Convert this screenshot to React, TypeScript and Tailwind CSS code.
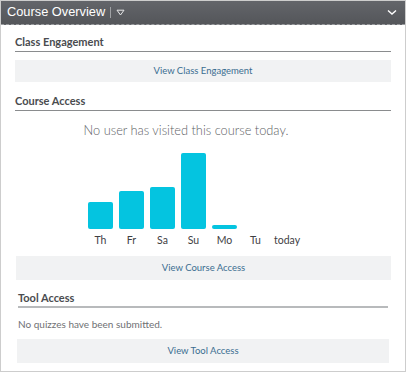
import React from "react";

const bars = [
  { day: "Th", h: 27 },
  { day: "Fr", h: 38 },
  { day: "Sa", h: 42 },
  { day: "Su", h: 76 },
  { day: "Mo", h: 4 },
  { day: "Tu", h: 0 },
  { day: "today", h: 0 },
];

const SectionTitle = ({ children, className = "" }: any) => {
  return (
    <div
      className={`text-[11px] font-bold leading-[14px] text-[#4a4c4f] pb-[2px] border-b border-[#8a8c8e] ${className}`}
    >
      {children}
    </div>
  );
};

const LinkButton = ({ children, className = "" }: any) => {
  return (
    <div
      className={`flex items-center justify-center bg-[#f1f2f3] text-[9.5px] text-[#3b6e91] ${className}`}
    >
      {children}
    </div>
  );
};

export default function App() {
  return (
    <div className="w-[406px] h-[372px] bg-white border border-[#cdcdcd] font-['Lato','Noto_Sans',sans-serif] overflow-hidden">
      <div className="h-6 flex items-center px-[6px] bg-gradient-to-b from-[#63656a] to-[#54565a] border-b border-dashed border-[#9a9c9f] font-['Liberation_Sans',Arial,sans-serif]">
        <span className="text-white text-[12.8px] leading-none">Course Overview</span>
        <span className="ml-[5px] w-px h-[11px] bg-[#9fa1a4]"></span>
        <svg className="ml-[5px]" width="9" height="7" viewBox="0 0 9 7">
          <path d="M1 1.2h7L4.5 6z" fill="none" stroke="#e6e7e8" strokeWidth="1" />
        </svg>
        <svg className="ml-auto mr-[2px]" width="10" height="7" viewBox="0 0 10 7">
          <path d="M1 1.5l4 3.5 4-3.5" fill="none" stroke="#ffffff" strokeWidth="1.4" />
        </svg>
      </div>

      <div className="px-[14px]">
        <SectionTitle className="mt-[10px]">Class Engagement</SectionTitle>
        <LinkButton className="mt-[8px] h-[22px]">View Class Engagement</LinkButton>

        <SectionTitle className="mt-[12px]">Course Access</SectionTitle>
        <div className="mt-[11px] pr-[34px] text-center text-[12.8px] leading-[16px] text-[#606265] font-light">
          No user has visited this course today.
        </div>

        <div className="ml-[73px] mt-[14px] flex gap-[6px] items-end h-[77px]">
          {bars.map((b) => (
            <div
              key={b.day}
              className="w-[25px] rounded-[2px] bg-[#04c4e0]"
              style={{ height: b.h }}
            ></div>
          ))}
        </div>
        <div className="ml-[73px] mt-[4px] flex gap-[6px]">
          {bars.map((b) => (
            <div
              key={b.day}
              className="w-[25px] text-center text-[10.5px] leading-[14px] text-[#3e4043] whitespace-nowrap"
            >
              {b.day}
            </div>
          ))}
        </div>

        <LinkButton className="mt-[9px] h-6 ml-px">View Course Access</LinkButton>
      </div>

      <div className="px-[16px]">
        <div className="mt-[11px] text-[11px] font-bold leading-[14px] text-[#4a4c4f] pb-[1px] border-b-2 border-[#b8babc] mr-[1px] ml-px">
          Tool Access
        </div>
        <div className="mt-[9px] ml-px text-[10px] leading-[14px] text-[#6f7174]">
          No quizzes have been submitted.
        </div>
        <LinkButton className="mt-[8px] h-6">View Tool Access</LinkButton>
      </div>
    </div>
  );
}
